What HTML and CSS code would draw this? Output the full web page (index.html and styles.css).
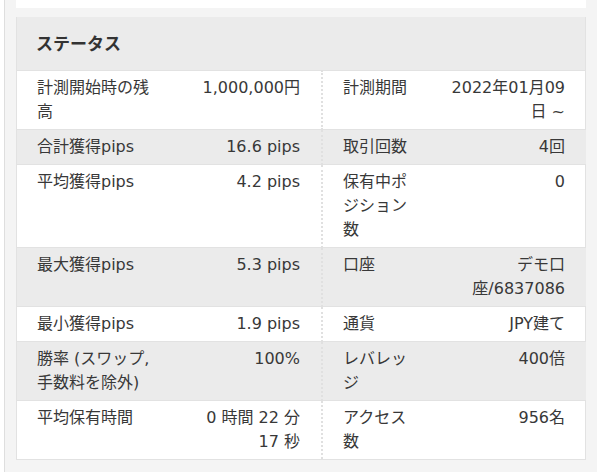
FILE: index.html
```html
<!DOCTYPE html>
<html lang="ja">
<head>
<meta charset="utf-8">
<link rel="stylesheet" href="styles.css">
</head>
<body>
<div class="page">
  <div class="edge"></div>
  <div class="main">
    <div class="topbox"></div>
    <section class="panel">
      <h2 class="panel-title">ステータス</h2>
      <table class="stats">
        <tr>
          <th>計測開始時の残高</th><td>1,000,000円</td>
          <th class="sep">計測期間</th><td>2022年01月09日 ~</td>
        </tr>
        <tr class="alt">
          <th>合計獲得pips</th><td>16.6 pips</td>
          <th class="sep">取引回数</th><td>4回</td>
        </tr>
        <tr>
          <th>平均獲得pips</th><td>4.2 pips</td>
          <th class="sep">保有中ポジション数</th><td>0</td>
        </tr>
        <tr class="alt">
          <th>最大獲得pips</th><td>5.3 pips</td>
          <th class="sep">口座</th><td>デモ口座/6837086</td>
        </tr>
        <tr>
          <th>最小獲得pips</th><td>1.9 pips</td>
          <th class="sep">通貨</th><td>JPY建て</td>
        </tr>
        <tr class="alt">
          <th>勝率 (スワップ, 手数料を除外)</th><td>100%</td>
          <th class="sep">レバレッジ</th><td>400倍</td>
        </tr>
        <tr>
          <th>平均保有時間</th><td>0 時間 22 分 17 秒</td>
          <th class="sep">アクセス数</th><td>956名</td>
        </tr>
      </table>
    </section>
  </div>
</div>
</body>
</html>
```

FILE: styles.css
```css
html, body {
  margin: 0;
  padding: 0;
  background: #f4f4f4;
}
body {
  font-family: "DejaVu Sans", "Noto Sans CJK JP", sans-serif;
  font-size: 16px;
  color: #383838;
  width: 597px;
  height: 472px;
  overflow: hidden;
}
.page {
  display: flex;
  height: 472px;
}
.edge {
  width: 4px;
  background: #fff;
  border-right: 1px solid #dedede;
  flex: none;
}
.main {
  width: 570px;
  margin-left: 11px;
  flex: none;
}
.topbox {
  height: 8px;
  background: #fff;
}
.panel {
  margin-top: 9px;
  background: #fff;
  border: 1px solid #e2e2e2;
  border-top: none;
}
.panel-title {
  margin: 0;
  height: 53px;
  box-sizing: border-box;
  padding: 14px 19px 0;
  background: #ebebeb;
  font-family: "Noto Sans CJK JP", sans-serif;
  font-size: 17px;
  font-weight: 700;
  line-height: 24px;
  color: #333;
}
.stats {
  width: 100%;
  border-collapse: collapse;
  table-layout: fixed;
}
.stats th, .stats td {
  font-weight: 400;
  line-height: 24px;
  padding: 5px 20px 5px 20px;
  vertical-align: top;
  border-top: 1px solid #e2e2e2;
}
.stats th {
  text-align: left;
}
.stats td {
  text-align: right;
  padding-right: 21px;
}
.stats tr > :nth-child(1) { width: 113px; }
.stats tr > :nth-child(2) { width: 110px; }
.stats tr > :nth-child(3) { width: 66px; }
.stats tr > :nth-child(4) { width: 116px; }
.stats .sep {
  border-left: 2px dotted #e0e0e0;
}
.stats tr.alt th, .stats tr.alt td {
  background: #ebebeb;
}
```
